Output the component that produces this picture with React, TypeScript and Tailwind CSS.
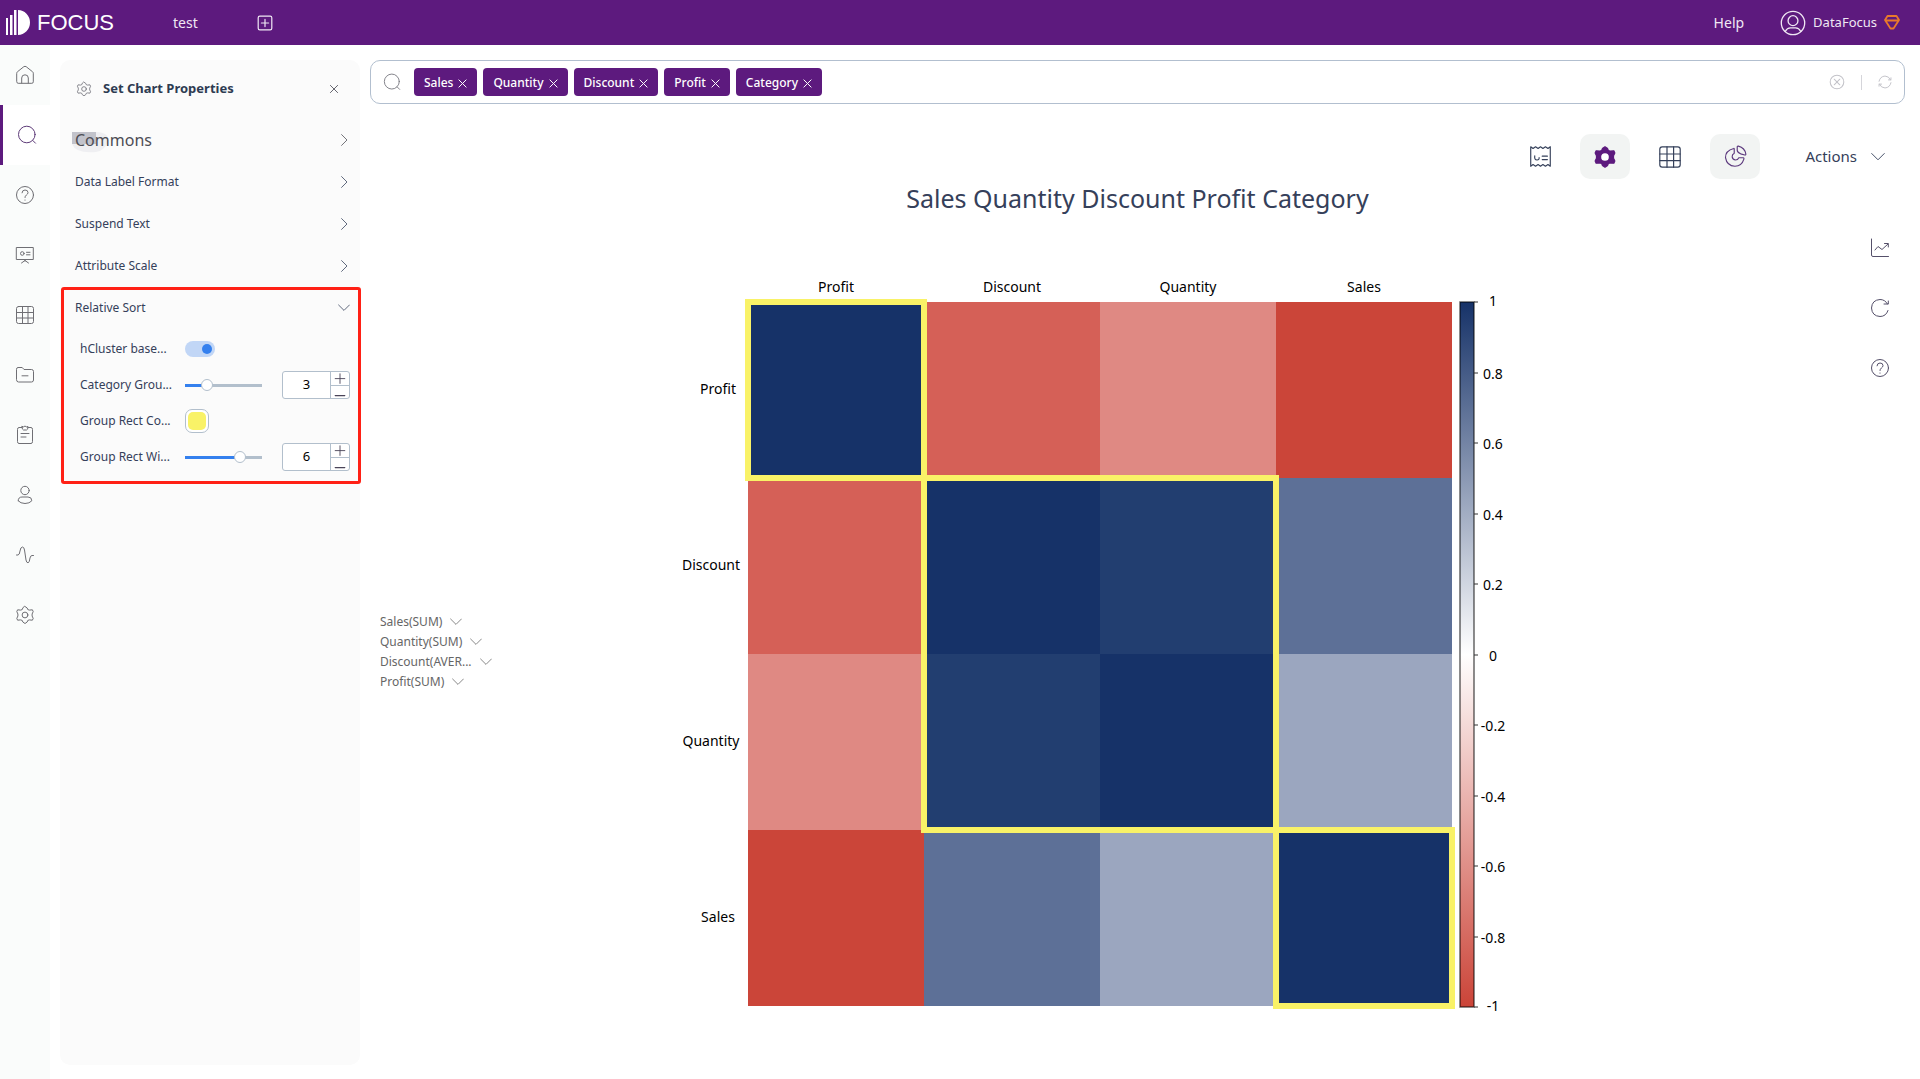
import { useState } from 'react';
import type { ReactNode } from 'react';

interface IconProps { size?: number; className?: string; children: ReactNode; }

function Icon({ size = 20, className = '', children }: IconProps) {
    return (
        <svg
            width={size}
            height={size}
            viewBox="0 0 20 20"
            fill="none"
            stroke="currentColor"
            strokeLinecap="round"
            strokeLinejoin="round"
            className={`shrink-0 ${className}`}
            aria-hidden="true"
        >
            {children}
        </svg>
    );
}

const GEAR = 'M10 1.5 L12.2 3 L12.8 4.6 L14.4 5.1 L17.4 4.8 L18.2 6.6 L17.1 9 L17.1 11 L18.2 13.4 L17.4 15.2 L14.4 14.9 L12.8 15.4 L12.2 17 L10 18.5 L7.8 17 L7.2 15.4 L5.6 14.9 L2.6 15.2 L1.8 13.4 L2.9 11 L2.9 9 L1.8 6.6 L2.6 4.8 L5.6 5.1 L7.2 4.6 L7.8 3 Z';

const homeIcon = <path d="M1.7 8.2 Q1.7 7.4 2.4 6.8 L8.8 1.7 Q10 .9 11.2 1.7 L17.6 6.8 Q18.3 7.4 18.3 8.2 V16.8 Q18.3 18.3 16.8 18.3 H3.2 Q1.7 18.3 1.7 16.8 Z M6.7 18 V13 Q6.7 9.8 10 9.8 Q13.3 9.8 13.3 13 V18" />;
const searchIcon = <><circle cx="9.8" cy="9.5" r="8.3" /><path d="M15.8 15.5 L18.5 18.2" /></>;
const helpIcon = <><circle cx="10" cy="10" r="8.5" /><path d="M7 7.8 Q7.2 5 10 5 Q13 5 13 7.6 Q13 9 11.3 10.1 Q10 11 10 12.5 M10 15 V15.2" /></>;
const boardIcon = <><path d="M1.7 2.5 H18.3 V14.5 H1.7 Z M10 14.5 V16 M6.5 18 L10 15.5 L13.5 18" /><circle cx="7.3" cy="8.5" r="1.8" /><path d="M11.5 7.3 H15 M11.5 9.8 H15" /></>;
const tableIcon = <><rect x="1.5" y="1.5" width="17" height="17" rx="2" /><path d="M7.5 1.5 V18.5 M13 1.5 V18.5 M1.5 7.5 H18.5 M1.5 13 H18.5" /></>;
const folderIcon = <path d="M1.5 4 Q1.5 2.5 3 2.5 H7.2 L9 4.5 H16.5 Q18.5 4.5 18.5 6.5 V15 Q18.5 17 16.5 17 H3.5 Q1.5 17 1.5 15 Z M7 10.8 H13" />;
const clipboardIcon = <path d="M7 2.5 H4 Q2.5 2.5 2.5 4.5 V16.5 Q2.5 18.5 4 18.5 H16 Q17.5 18.5 17.5 16.5 V4.5 Q17.5 2.5 16 2.5 H13 M7 1.5 Q7 5 8.5 5 H11.5 Q13 5 13 1.5 Q11 2.5 10 1 Q9 2.5 7 1.5 M6 8.5 H14 M6 12 H11" />;
const userIcon = <><circle cx="10" cy="5.5" r="4.2" /><path d="M3.2 15.8 Q3.2 12 7 12 H13 Q16.8 12 16.8 15.8 Q14.5 18.5 10 18.5 Q5.5 18.5 3.2 15.8" /></>;
const pulseIcon = <path d="M1.5 10 H3 Q4.5 10 5 6 Q5.5 2 7.5 2 Q9 2 9.5 5 L11 15 Q11.5 17.8 13 17.8 Q14.5 17.8 15 13 Q15.5 10.5 17 10.5 H18.5" />;
const gearIcon = <><path d={GEAR} /><circle cx="10" cy="10" r="2.9" /></>;
const receiptIcon = <><path d="M1.5 1.5 L3.5 3 L5.7 1.5 L7.9 3 L10 1.5 L12.1 3 L14.3 1.5 L16.5 3 L18.5 1.5 V18.5 L16.5 17 L14.3 18.5 L12.1 17 L10 18.5 L7.9 17 L5.7 18.5 L3.5 17 L1.5 18.5 Z" /><path d="M5 9.5 Q4.5 13 7 13 Q9 13 8.8 11 M11.5 9.7 H16 M11.5 12.7 H16" /></>;
const pieIcon = <><path d="M8.5 3 Q8.9 2.4 8.9 4 V7.2 Q6.9 8.3 7.1 10.3 Q7.5 12.8 10 13 Q12 13 12.9 11.1 H16.8 Q17.6 11.2 17.2 12.5 Q15.5 18.2 9.5 18.5 Q2.5 18.2 1.3 11 Q1.2 4.8 8.5 3 Z" /><path d="M11.5 1.5 Q11.5 .9 12.5 1 Q18.2 2.4 19 8 Q18.9 8.9 18 8.7 L14.5 7.7 Q11.5 6.2 11.5 4.5 Z" /></>;

const navItems = [
    { label: 'Home', icon: homeIcon },
    { label: 'Search', icon: searchIcon, active: true },
    { label: 'Questions', icon: helpIcon },
    { label: 'Boards', icon: boardIcon },
    { label: 'Tables', icon: tableIcon },
    { label: 'Resources', icon: folderIcon },
    { label: 'Tasks', icon: clipboardIcon },
    { label: 'Users', icon: userIcon },
    { label: 'Activity', icon: pulseIcon },
    { label: 'System', icon: gearIcon },
];

const keywords = ['Sales', 'Quantity', 'Discount', 'Profit', 'Category'];
const sections = ['Data Label Format', 'Suspend Text', 'Attribute Scale'];
const measures = ['Sales(SUM)', 'Quantity(SUM)', 'Discount(AVER...', 'Profit(SUM)'];

function Header() {
    return (
        <header className="flex h-[45px] items-center bg-[#5d1a7e] text-[#f0e8f4]">
            <a href="#" className="flex w-[173px] items-center gap-[7px] pl-[6px] text-white" aria-label="Focus">
                <svg width="24" height="25" viewBox="0 0 24 25" fill="currentColor" aria-hidden="true">
                    <path d="M0 8 H2 V25 H0 Z M4 5 H6.5 V25 H4 Z M8 0 H10.5 V25 H8 Z M12 0 A12 12.5 0 0 1 12 25 Z" />
                </svg>
                <span className="font-['Liberation_Sans',sans-serif] text-[22px] leading-6">FOCUS</span>
            </a>
            <a href="#" className="text-sm">test</a>
            <button type="button" className="ml-[59px]" aria-label="New tab">
                <Icon size={16}><rect x="1.5" y="1.5" width="17" height="17" rx="2" strokeWidth="1.5" /><path d="M10 5.5 V14.5 M5.5 10 H14.5" strokeWidth="1.5" /></Icon>
            </button>
            <a href="#" className="ml-auto text-sm">Help</a>
            <button type="button" className="mr-5 ml-9 flex items-center text-[13px]">
                <Icon size={26} className="mr-[7px]">
                    <circle cx="10" cy="10" r="9" />
                    <circle cx="10" cy="8.2" r="3.8" />
                    <path d="M4 16.5 Q5.5 13.8 8 13.8 H12 Q14.5 13.8 16 16.5" />
                </Icon>
                DataFocus
                <svg width="16" height="15" viewBox="0 0 16 15" fill="none" stroke="#e9792b" strokeWidth="1.8" strokeLinejoin="round" className="ml-[7px]" aria-hidden="true">
                    <path d="M3.5 1 H12.5 L15 5 L9.5 13.5 H6.5 L1 5 Z M2 5.5 H14" />
                </svg>
            </button>
        </header>
    );
}

function SideNav() {
    return (
        <nav className="flex w-[50px] shrink-0 flex-col bg-[#fafcfb]">
            {navItems.map(item => (
                <a
                    key={item.label}
                    href="#"
                    aria-label={item.label}
                    className={item.active
                        ? 'flex h-[60px] items-center justify-center border-l-[3px] border-[#5d1a7e] bg-white pb-px text-[#5d3a78]'
                        : 'flex h-[60px] items-center justify-center pb-px text-[#6f6f74]'}
                >
                    <Icon>{item.icon}</Icon>
                </a>
            ))}
        </nav>
    );
}

interface SliderRowProps { id: string; label: string; initial: number; max: number; }

function SliderRow({ id, label, initial, max }: SliderRowProps) {
    const [value, setValue] = useState(initial);
    const step = (delta: number) => setValue(Math.min(max, Math.max(0, value + delta)));
    const fill = (value / max) * 100;

    return (
        <div className="flex h-9 items-center">
            <label htmlFor={id} className="w-[105px] whitespace-nowrap">{label}</label>
            <input
                id={id}
                type="range"
                min={0}
                max={max}
                value={value}
                onChange={e => setValue(Number(e.target.value))}
                style={{ backgroundImage: `linear-gradient(to right, #3480ee ${fill}%, #b2bfcc ${fill}%)` }}
                className="h-[3px] w-[77px] appearance-none [&::-webkit-slider-thumb]:size-3 [&::-webkit-slider-thumb]:appearance-none [&::-webkit-slider-thumb]:rounded-full [&::-webkit-slider-thumb]:border [&::-webkit-slider-thumb]:border-[#b2bfcc] [&::-webkit-slider-thumb]:bg-white"
            />
            <div className="ml-5 flex h-7 w-[68px] overflow-hidden rounded-[3px] border border-[#b2bfcc] bg-white text-[13px] text-black">
                <input
                    type="text"
                    aria-label={`${label} value`}
                    value={value}
                    onChange={e => setValue(Math.min(max, Number(e.target.value) || 0))}
                    className="w-12 border-r border-[#b2bfcc] text-center outline-none"
                />
                <div className="flex flex-1 flex-col text-[#4a4458]">
                    <button type="button" aria-label="Increase" onClick={() => step(1)} className="flex flex-1 items-center justify-center border-b border-[#b2bfcc]">
                        <Icon size={12}><path d="M2 11 H18 M10 3 V19" strokeWidth="1.5" /></Icon>
                    </button>
                    <button type="button" aria-label="Decrease" onClick={() => step(-1)} className="flex flex-1 items-end justify-center">
                        <Icon size={12}><path d="M2 16 H18" strokeWidth="2" /></Icon>
                    </button>
                </div>
            </div>
        </div>
    );
}

function Chevron({ down = false, size = 12 }: { down?: boolean; size?: number }) {
    return (
        <Icon size={size}>
            <path d={down ? 'M1 5 L10 14 L19 5' : 'M6 1 L15 10 L6 19'} strokeWidth="1.3" />
        </Icon>
    );
}

function PropertiesPanel() {
    const [clustered, setClustered] = useState(true);
    const [color, setColor] = useState('#f9f267');

    return (
        <aside className="mx-[10px] mt-[15px] mb-[14px] w-[300px] shrink-0 rounded-[10px] bg-[#fbfbfb] text-xs text-[#35405a]">
            <div className="flex h-[59px] items-center pr-5 pb-px pl-4">
                <Icon size={16} className="text-[#6b6b74]">{gearIcon}</Icon>
                <h2 className="ml-[11px] text-[13px] font-bold text-[#2e3b52]">Set Chart Properties</h2>
                <button type="button" aria-label="Close" className="ml-auto text-[#55555f]">
                    <Icon size={12}><path d="M4 4 L16 16 M16 4 L4 16" strokeWidth="1.5" /></Icon>
                </button>
            </div>

            <button type="button" className="relative flex h-[42px] w-full items-center justify-between pr-[10px] pl-[15px] text-left text-base text-[#4d4d55]">
                <svg width="40" height="22" viewBox="0 0 40 22" className="absolute top-[13px] left-3" aria-hidden="true">
                    <path d="M0 0 H24 Q36 0 36 8 Q34 18 24 20 Q4 22 0 12 Z" fill="#efeff2" />
                    <path d="M0 0 H24 V12 H0 Z" fill="#c2c3cb" />
                </svg>
                <span className="relative">Commons</span>
                <Chevron />
            </button>
            {sections.map(name => (
                <button key={name} type="button" className="flex h-[42px] w-full items-center justify-between pr-[10px] pl-[15px] text-left">
                    {name}
                    <Chevron />
                </button>
            ))}

            <section className="-mr-[1px] ml-[1px] rounded-[3px] border-[3px] border-[#ff2015] pb-[6px]">
                <button type="button" className="flex h-9 w-full items-center justify-between pr-2 pl-[11px] text-left">
                    Relative Sort
                    <Chevron down />
                </button>
                <div className="pt-[5px] pl-4">
                    <div className="flex h-9 items-center">
                        <label htmlFor="hcluster" className="w-[105px] whitespace-nowrap">hCluster base...</label>
                        <input
                            id="hcluster"
                            type="checkbox"
                            role="switch"
                            checked={clustered}
                            onChange={e => setClustered(e.target.checked)}
                            className="flex h-4 w-[30px] appearance-none items-center rounded-full bg-[#d5d9e0] px-[3px] before:size-[10px] before:rounded-full before:bg-white checked:justify-end checked:bg-[#c1d6f6] checked:before:bg-[#3480ee]"
                        />
                    </div>
                    <SliderRow id="group-count" label="Category Grou..." initial={3} max={12} />
                    <div className="flex h-9 items-center">
                        <label htmlFor="rect-color" className="w-[105px] whitespace-nowrap">Group Rect Co...</label>
                        <input
                            id="rect-color"
                            type="color"
                            value={color}
                            onChange={e => setColor(e.target.value)}
                            className="size-6 appearance-none rounded-[7px] border border-[#b2bfcc] bg-white p-[2px] [&::-webkit-color-swatch]:rounded-[5px] [&::-webkit-color-swatch]:border-0 [&::-webkit-color-swatch-wrapper]:p-0"
                        />
                    </div>
                    <SliderRow id="rect-width" label="Group Rect Wi..." initial={6} max={8} />
                </div>
            </section>
        </aside>
    );
}

function SearchBar() {
    return (
        <div className="flex h-11 items-center rounded-[10px] border border-[#b2bfcf] px-3">
            <Icon size={18} className="text-[#77777f]">{searchIcon}</Icon>
            <div className="ml-[13px] flex gap-[6px]">
                {keywords.map(word => (
                    <span key={word} className="flex h-7 items-center gap-[5px] rounded-[4px] bg-[#5d1a7e] px-[10px] pt-[2px] text-xs font-medium text-white">
                        {word}
                        <button type="button" aria-label={`Remove ${word}`}>
                            <Icon size={9}><path d="M2 2 L18 18 M18 2 L2 18" strokeWidth="2.2" /></Icon>
                        </button>
                    </span>
                ))}
            </div>
            <input type="text" aria-label="Search keywords" className="min-w-0 flex-1 px-2 text-xs outline-none" />
            <div className="flex items-center text-[#c3c3c9]">
                <button type="button" aria-label="Clear">
                    <Icon size={16}><circle cx="10" cy="10" r="8.5" strokeWidth="1.3" /><path d="M6.5 6.5 L13.5 13.5 M13.5 6.5 L6.5 13.5" strokeWidth="1.3" /></Icon>
                </button>
                <span className="mx-4 h-[15px] w-px bg-[#d5d5da]" />
                <button type="button" aria-label="Refresh">
                    <Icon size={14}><path d="M18 7 Q15.5 1.5 10 1.5 Q3 2 1.5 9 M2 13 Q4.5 18.5 10 18.5 Q17 18 18.5 11 M15 7 H18.5 V4 M5 13 H1.5 V16" strokeWidth="1.4" /></Icon>
                </button>
            </div>
        </div>
    );
}

function Toolbar() {
    return (
        <div className="mt-[30px] flex h-[45px] items-center justify-end gap-[15px] pr-5 text-[#35405a]">
            <button type="button" aria-label="Details" className="flex h-[45px] w-[50px] items-center justify-center">
                <Icon size={23}>{receiptIcon}</Icon>
            </button>
            <button type="button" aria-label="Chart settings" className="flex h-[45px] w-[50px] items-center justify-center rounded-[10px] bg-[#f2f4f3] text-[#5d1a7e]">
                <Icon size={24}>
                    <path d={GEAR} fill="currentColor" />
                    <circle cx="10" cy="10" r="3.2" fill="#fff" stroke="none" />
                </Icon>
            </button>
            <button type="button" aria-label="Table view" className="flex h-[45px] w-[50px] items-center justify-center">
                <Icon size={24}>{tableIcon}</Icon>
            </button>
            <button type="button" aria-label="Chart view" className="flex h-[45px] w-[50px] items-center justify-center rounded-[10px] bg-[#f2f4f3] text-[#5d3a7e]">
                <Icon size={23}>{pieIcon}</Icon>
            </button>
            <button type="button" className="ml-[30px] flex items-center gap-[14px] text-[15px]">
                Actions
                <Chevron down size={14} />
            </button>
        </div>
    );
}

const CELL = 176;
const axis = [
    { name: 'Profit', rowX: 41 },
    { name: 'Discount', rowX: 34 },
    { name: 'Quantity', rowX: 34 },
    { name: 'Sales', rowX: 41 },
];
const cells = [
    ['#163268', '#d56057', '#df8983', '#cb4539'],
    ['#d56057', '#163268', '#223e70', '#5d7097'],
    ['#df8983', '#223e70', '#163268', '#9ba6bf'],
    ['#cb4539', '#5d7097', '#9ba6bf', '#163268'],
];
// [first row/column, number of rows/columns] of every cluster
const groups = [[0, 1], [1, 2], [3, 1]];
const ticks = ['1', '0.8', '0.6', '0.4', '0.2', '0', '-0.2', '-0.4', '-0.6', '-0.8', '-1'];

function Heatmap() {
    return (
        <svg viewBox="0 0 922 750" className="w-full max-w-[922px]" role="img" aria-label="Correlation heatmap">
            <defs>
                <linearGradient id="scale" x1="0" y1="0" x2="0" y2="1">
                    <stop offset="0" stopColor="#163268" />
                    <stop offset="0.5" stopColor="#ffffff" />
                    <stop offset="1" stopColor="#cb4438" />
                </linearGradient>
            </defs>
            <g fontSize="14" textAnchor="middle" fill="#000">
                {axis.map((item, i) => (
                    <g key={item.name}>
                        <text x={71 + CELL * i + CELL / 2} y="22">{item.name}</text>
                        <text x={item.rowX} y={32 + CELL * i + CELL / 2 + 4}>{item.name}</text>
                    </g>
                ))}
                {ticks.map((tick, i) => (
                    <text key={tick} x="816" y={(i % 10 === 0 ? 36 : 38) + Math.round(i * 70.5)}>{tick}</text>
                ))}
            </g>
            <g shapeRendering="crispEdges">
                {cells.map((row, r) => row.map((fill, c) => (
                    <rect key={`${r}-${c}`} x={71 + CELL * c} y={32 + CELL * r} width={CELL} height={CELL} fill={fill} />
                )))}
                {groups.map(([start, count]) => (
                    <rect
                        key={start}
                        x={71 + CELL * start}
                        y={32 + CELL * start}
                        width={CELL * count}
                        height={CELL * count}
                        fill="none"
                        stroke="#f9f267"
                        strokeWidth="6"
                    />
                ))}
            </g>
            <rect x="783" y="32" width="14" height="705" fill="url(#scale)" stroke="#000" strokeOpacity="0.6" strokeWidth="1.5" />
            {ticks.map((tick, i) => (
                <path key={tick} d={`M797 ${32 + Math.round(i * 70.5)} h4`} stroke="#333" />
            ))}
        </svg>
    );
}

function ChartArea() {
    return (
        <div className="flex flex-1 items-stretch">
            <ul className="flex w-[140px] shrink-0 flex-col justify-center pt-1 pl-[10px] text-xs leading-5 text-[#666]">
                {measures.map(name => (
                    <li key={name}>
                        <button type="button" className="flex items-center gap-2">
                            {name}
                            <Chevron down />
                        </button>
                    </li>
                ))}
            </ul>
            <div className="flex flex-1 items-start justify-center pt-[50px]">
                <Heatmap />
            </div>
            <div className="flex w-[140px] shrink-0 flex-col items-end gap-10 pt-[18px] pr-[15px] text-[#55506a]">
                <button type="button" aria-label="Trend">
                    <Icon><path d="M1.5 1 V17 Q1.5 18.5 3 18.5 H18.5 M5 12 L8 8.5 L12 11.5 L18 6 M14.5 5.5 H18.3 V9" /></Icon>
                </button>
                <button type="button" aria-label="Reload">
                    <Icon><path d="M18 12.5 Q16 18.5 10 18.5 Q2 18 1.5 10 Q2 2 10 1.5 Q15 1.5 17.5 6 M14 6 H18.3 V3" /></Icon>
                </button>
                <button type="button" aria-label="Help">
                    <Icon>{helpIcon}</Icon>
                </button>
            </div>
        </div>
    );
}

export default function App() {
    return (
        <div className="flex min-h-screen flex-col bg-white font-['Noto_Sans','Open_Sans',sans-serif]">
            <Header />
            <div className="flex flex-1">
                <SideNav />
                <PropertiesPanel />
                <main className="flex min-w-0 flex-1 flex-col pt-[15px] pr-[15px]">
                    <SearchBar />
                    <Toolbar />
                    <h1 className="pb-[2px] text-center text-[25px] leading-[39px] text-[#35405a]">Sales Quantity Discount Profit Category</h1>
                    <ChartArea />
                </main>
            </div>
        </div>
    );
}
